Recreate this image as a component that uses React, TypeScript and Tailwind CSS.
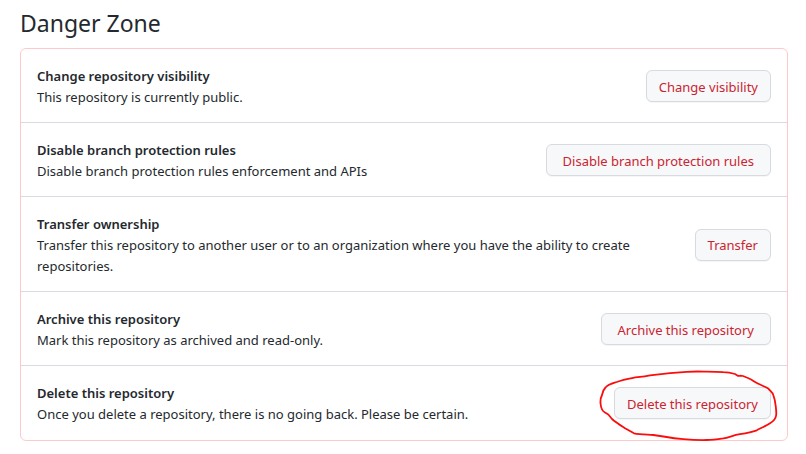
type Action = {
  title: string;
  description: string;
  button: string;
  padding: string;
  circled?: boolean;
};

const actions: Action[] = [
  {
    title: "Change repository visibility",
    description: "This repository is currently public.",
    button: "Change visibility",
    padding: "px-3",
  },
  {
    title: "Disable branch protection rules",
    description: "Disable branch protection rules enforcement and APIs",
    button: "Disable branch protection rules",
    padding: "px-4",
  },
  {
    title: "Transfer ownership",
    description:
      "Transfer this repository to another user or to an organization where you have the ability to create repositories.",
    button: "Transfer",
    padding: "px-3",
  },
  {
    title: "Archive this repository",
    description: "Mark this repository as archived and read-only.",
    button: "Archive this repository",
    padding: "px-4",
  },
  {
    title: "Delete this repository",
    description: "Once you delete a repository, there is no going back. Please be certain.",
    button: "Delete this repository",
    padding: "px-3",
    circled: true,
  },
];

function HandDrawnCircle() {
  return (
    <svg
      aria-hidden="true"
      viewBox="0 0 180 72"
      className="pointer-events-none absolute -top-[17px] -right-[7px] h-[72px] w-[180px] max-w-none overflow-visible"
      fill="none"
      stroke="#fb0d0d"
      strokeWidth="1.8"
      strokeLinecap="round"
      strokeLinejoin="round"
    >
      <path d="M139.700 5.700L137 4C133 3 129 2.400 125.300 2.200C120 1.700 114 1.600 108.700 1.600C102 1.500 95 1.300 88.700 1.800L72 3.200L52 5.300C46 6.500 41 7 35.300 7.800C29 9 24 10 18.700 12C14 13.500 10 14.500 7.500 17.500C5 20 4.500 22 4 25C2.500 28 2.200 31 2.600 34C3 38 4 41 7 42.500L10.300 44.500L14 49C18 52.500 22 55 27 58.300L36 63.300C42 64.500 49 64.500 55.300 65L68.700 67C74 68 80 68.700 85.300 69.200C93 69.800 101 70.200 108.700 70C114 70 120 69.200 125.300 68.400C131 67.200 136 65.200 142 64.200C148 63.200 154 62 158.700 60.300C164 57.500 169 55.500 172 53.300C176 51 177.700 49 178.200 45C178.500 42 178 39 177.800 36.700C177.300 32 176.500 28 175.300 25C174.500 22 172 21 170.300 18.500C167 16.500 163.500 15.500 160.300 13.800C156 11.500 152 8.500 148.700 7.500L145 6C143 5.500 141 6 139.700 5.700" />
    </svg>
  );
}

export default function App() {
  return (
    <main className="bg-white pt-2 pr-[18px] pb-3 pl-5 font-['Noto_Sans','Open_Sans',sans-serif] text-[13px] leading-[21px] text-[#24292e]">
      <h2 className="mb-2.5 text-[23px] leading-[30px]">Danger Zone</h2>
      <ul className="rounded-md border border-[#ffc9cc]">
        {actions.map((action) => (
          <li
            key={action.title}
            className="flex items-center justify-between gap-4 border-b border-[#d8dbe2] px-4 pt-4 pb-[15px] last:border-b-0 last:pb-4"
          >
            <div className="mt-px -mb-px max-w-[620px]">
              <h3 className="font-semibold">{action.title}</h3>
              <p>{action.description}</p>
            </div>
            <div className="relative shrink-0">
              <button
                type="button"
                className={`block h-8 rounded-md border border-[#d7dade] bg-[#f6f8fa] pt-0.5 ${action.padding} text-[#cb2431] shadow-[0_1px_0_rgba(27,31,35,0.04)]`}
              >
                {action.button}
              </button>
              {action.circled && <HandDrawnCircle />}
            </div>
          </li>
        ))}
      </ul>
    </main>
  );
}
